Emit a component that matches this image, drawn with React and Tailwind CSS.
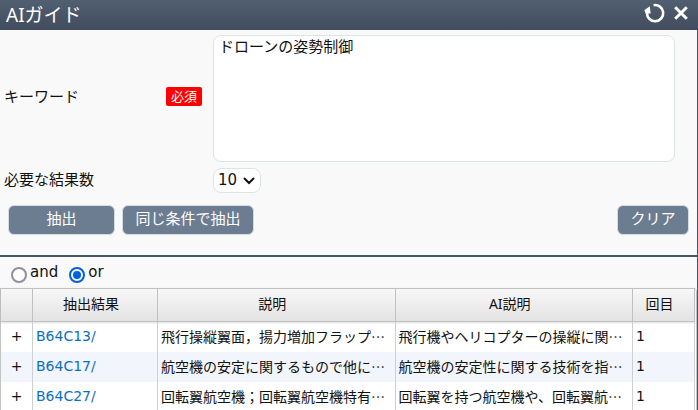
import { useState } from 'react'

const results = [
  {
    id: 1,
    code: 'B64C13/',
    description: '飛行操縦翼面，揚力増加フラップ…',
    aiDescription: '飛行機やヘリコプターの操縦に関…',
    count: 1,
  },
  {
    id: 2,
    code: 'B64C17/',
    description: '航空機の安定に関するもので他に…',
    aiDescription: '航空機の安定性に関する技術を指…',
    count: 1,
  },
  {
    id: 3,
    code: 'B64C27/',
    description: '回転翼航空機；回転翼航空機特有…',
    aiDescription: '回転翼を持つ航空機や、回転翼航…',
    count: 1,
  },
]

function ReloadIcon() {
  return (
    <svg width="22" height="22" viewBox="0 0 22 22" fill="none" aria-hidden="true">
      <path d="M9.6 3.2A8.1 8.1 0 1 1 3 11" stroke="white" strokeWidth="2.6" />
      <path d="M0.3 8.2L5.8 4.2L6.6 11.6L1.6 11.6Z" fill="white" />
    </svg>
  )
}

function CloseIcon() {
  return (
    <svg width="14" height="14" viewBox="0 0 14 14" fill="none" aria-hidden="true">
      <path d="M1.2 1.2L12.8 12.8M12.8 1.2L1.2 12.8" stroke="white" strokeWidth="3" />
    </svg>
  )
}

function ActionButton({ children, className, onClick }) {
  return (
    <button
      type="button"
      onClick={onClick}
      className={`h-[30px] rounded-md border border-[#d3dde3] bg-[#6c7d92] pb-1 text-[15px] leading-5 text-white ${className}`}
    >
      {children}
    </button>
  )
}

function OperatorRadio({ value, operator, onChange }) {
  return (
    <label className="flex items-start gap-[3px]">
      <input
        type="radio"
        name="operator"
        value={value}
        checked={operator === value}
        onChange={() => onChange(value)}
        className="mt-[5px] size-4 appearance-none rounded-full border-2 border-[#8f8f9d] bg-white checked:border-[#0060df] checked:bg-[#0060df] checked:bg-clip-content checked:p-[2px]"
      />
      <span className="font-['DejaVu_Sans',sans-serif] text-[15px] leading-5">{value}</span>
    </label>
  )
}

function App() {
  const [keyword, setKeyword] = useState('ドローンの姿勢制御')
  const [limit, setLimit] = useState('10')
  const [operator, setOperator] = useState('or')

  return (
    <div className="flex h-screen flex-col overflow-hidden bg-[#f9f9f9] font-['Noto_Sans','Noto_Sans_CJK_JP',sans-serif] text-[15px] text-[#111]">
      <header className="flex h-[30px] shrink-0 items-center justify-between bg-linear-to-b from-[#525f71] to-[#414d5f] pr-[10px] pl-[6px] text-white">
        <h1 className="text-[19px] leading-6">AIガイド</h1>
        <div className="flex items-center gap-2 pb-1">
          <button type="button" aria-label="リセット">
            <ReloadIcon />
          </button>
          <button type="button" aria-label="閉じる">
            <CloseIcon />
          </button>
        </div>
      </header>

      <main className="min-h-0 flex-1 border-r border-[#475366]">
        <form className="border-b-2 border-[#475366] pt-[5px] pb-5">
          <div className="grid grid-cols-[213px_1fr] items-center gap-y-[6px] pr-[22px]">
            <div className="flex items-center justify-between pr-[11px] pb-1 pl-1">
              <label htmlFor="keyword">キーワード</label>
              <span className="rounded-xs bg-[#ff0000] px-[5px] text-[13px] leading-[19px] text-white">必須</span>
            </div>
            <textarea
              id="keyword"
              value={keyword}
              onChange={(e) => setKeyword(e.target.value)}
              className="block h-[127px] w-full resize-none rounded-lg border border-[#dce4e6] bg-white px-[5px] leading-5 outline-none"
            />

            <label htmlFor="limit" className="pb-[2px] pl-1">
              必要な結果数
            </label>
            <div className="relative w-12">
              <select
                id="limit"
                value={limit}
                onChange={(e) => setLimit(e.target.value)}
                className="block h-[25px] w-full appearance-none rounded-lg border border-[#dce4e6] bg-white pb-[2px] pl-1 font-['DejaVu_Sans',sans-serif] leading-5 outline-none"
              >
                <option>10</option>
                <option>20</option>
                <option>50</option>
              </select>
              <svg
                className="pointer-events-none absolute top-[9px] right-[6px]"
                width="12"
                height="8"
                viewBox="0 0 12 8"
                fill="none"
                aria-hidden="true"
              >
                <path d="M1.5 1.5L6 6L10.5 1.5" stroke="#111" strokeWidth="2" strokeLinecap="round" />
              </svg>
            </div>
          </div>

          <div className="flex gap-[7px] px-2 pt-3">
            <ActionButton className="w-[107px]">抽出</ActionButton>
            <ActionButton className="w-[132px]">同じ条件で抽出</ActionButton>
            <ActionButton className="ml-auto w-[72px]" onClick={() => setKeyword('')}>
              クリア
            </ActionButton>
          </div>
        </form>

        <div className="flex h-[31px] gap-[11px] pt-[5px] pl-[11px]">
          <OperatorRadio value="and" operator={operator} onChange={setOperator} />
          <OperatorRadio value="or" operator={operator} onChange={setOperator} />
        </div>

        <div className="rounded-tr-sm border-r border-[#c5c5c5] bg-white pr-px">
          <table className="w-full table-fixed border-separate border-spacing-0 border-l border-[#c5c5c5] text-sm">
            <colgroup>
              <col className="w-8" />
              <col className="w-[125px]" />
              <col />
              <col />
              <col className="w-[62px]" />
            </colgroup>
            <thead>
              <tr className="h-[34px] bg-linear-to-b from-[#f8f8f8] to-[#e2e2e2] shadow-sm *:border-y *:border-r *:border-[#c0c0c0] *:p-0 *:pr-2 *:pb-[2px] *:font-normal">
                <th aria-label="展開"></th>
                <th>抽出結果</th>
                <th>説明</th>
                <th>AI説明</th>
                <th>回目</th>
              </tr>
            </thead>
            <tbody>
              {results.map((result) => (
                <tr
                  key={result.id}
                  className="h-[30px] even:bg-[#f2f5fb] *:overflow-hidden *:border-r *:border-[#cfcfcf] *:p-0 *:pb-[2px] *:pl-[3px] *:leading-5 *:whitespace-nowrap"
                >
                  <td>
                    <button type="button" className="block w-full pr-[3px] text-center font-['DejaVu_Sans',sans-serif]">
                      +
                    </button>
                  </td>
                  <td>
                    <a href="#" className="font-['DejaVu_Sans',sans-serif] text-[#0b6fbf]">
                      {result.code}
                    </a>
                  </td>
                  <td className="font-['Noto_Sans_CJK_JP',sans-serif]">{result.description}</td>
                  <td className="font-['Noto_Sans_CJK_JP',sans-serif]">{result.aiDescription}</td>
                  <td className="font-['DejaVu_Sans',sans-serif]">{result.count}</td>
                </tr>
              ))}
            </tbody>
          </table>
        </div>
      </main>
    </div>
  )
}

export default App
